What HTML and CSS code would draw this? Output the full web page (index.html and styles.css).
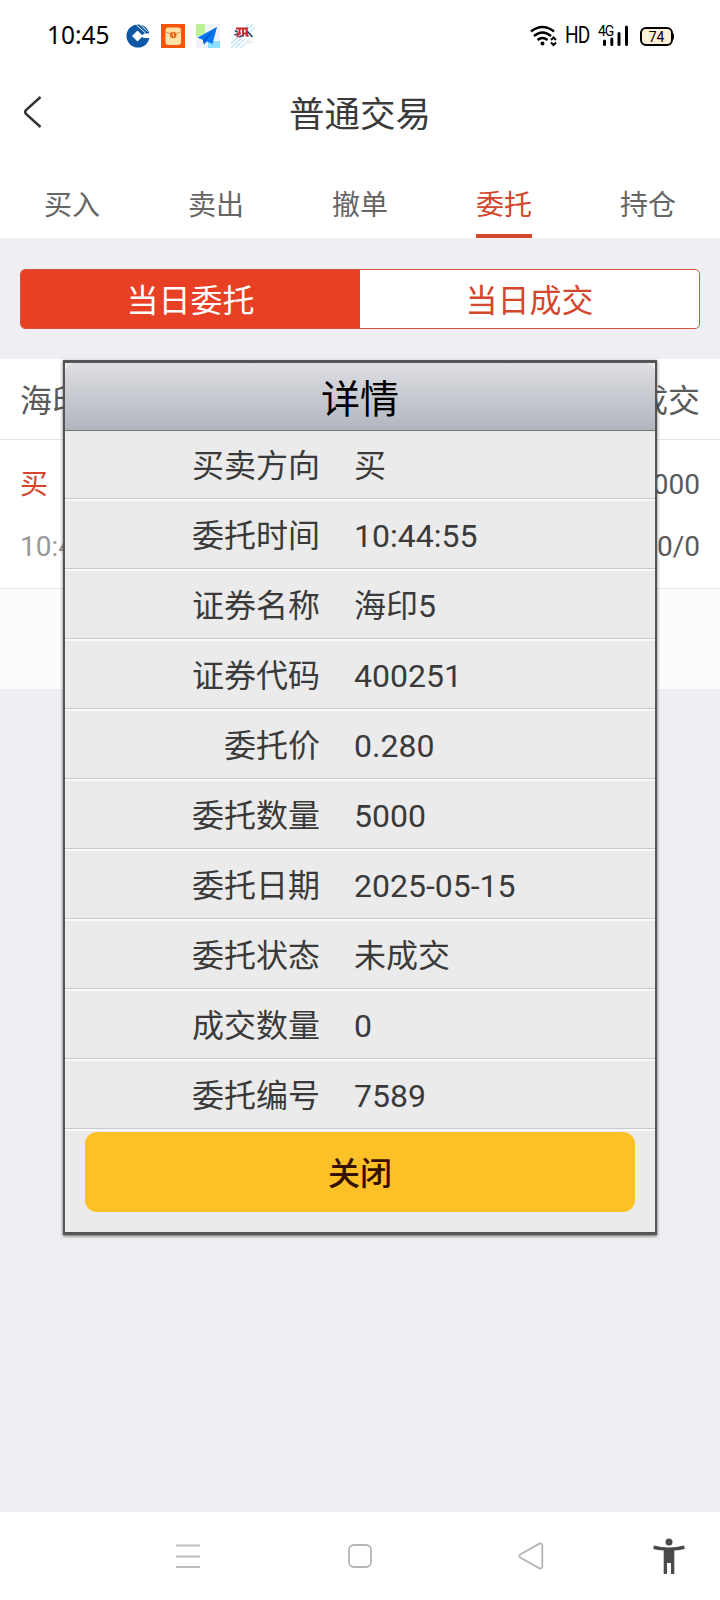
FILE: index.html
```html
<!DOCTYPE html>
<html lang="zh-CN">
<head>
<meta charset="utf-8">
<title>普通交易</title>
<link rel="stylesheet" href="styles.css">
</head>
<body>
<div class="phone">
  <header class="status">
    <span class="clock">10:45</span>
    <div class="apps">
      <svg width="24" height="24" viewBox="0 0 24 24"><circle cx="12" cy="12" r="11.500" fill="#0d57a5"/><path d="M11.500 6.500 17 12 11.500 17.500 6 12Z" fill="#fff"/><path d="M15.500 12 18 9.500H24V14H17.500Z" fill="#fff"/><path d="M10.500 1 19.500 9M13.500 0 21.500 7.500" stroke="#fff" stroke-width="1"/></svg>
      <svg width="24" height="24" viewBox="0 0 24 24"><rect width="24" height="24" fill="#f4540c"/><rect x="4.500" y="3.500" width="15.500" height="17.500" rx="3" fill="#ffe3a6"/><path d="M5 8Q12 12 19.500 8" fill="none" stroke="#e88a3c"/><circle cx="12.200" cy="11" r="3.300" fill="#ea6418"/><path d="M11.300 10 12.400 9.300V13" fill="none" stroke="#ffe3a6"/></svg>
      <svg width="24" height="24" viewBox="0 0 24 24"><rect width="24" height="24" fill="#f0f3fa"/><path d="M0 0H9V9L0 13Z" fill="#bdf294"/><path d="M12 17H24V24H12Z" fill="#8de0fb"/><path d="M21 3 1.500 13.500 7 16 8 20.500 11 17.500 16.500 20Z" fill="#0879f2"/><path d="M21 3 7 16 8 20.500 10 16Z" fill="#0553c4"/></svg>
      <svg width="24" height="24" viewBox="0 0 24 24"><path d="M0 20 7 13M0 24 11 14M4 24 14 15M9 24 18 16M17 5 22 0M19 8 24 3M14 4 18 0" stroke="#c2e4f4" stroke-width="1.300"/><path d="M13 20Q14 17 17 18Q20 15 23 19Z" fill="#edf1f6"/><path d="M5 4.500H17M8.500 4V9L6 13M12 4V12.500M15.500 4V11.500L17.500 12M6 9.500H10M13 9.500H17" fill="none" stroke="#c02e30" stroke-width="2"/><path d="M4 6.500 6.500 8M3.500 11 6 10M16 7 21.500 13M8 13 12 11.500" fill="none" stroke="#30456a" stroke-width="1.800"/></svg>
    </div>
    <div class="signals">
      <svg class="wifi" width="28" height="22" viewBox="0 0 28 22"><g fill="none" stroke="#000" stroke-width="2.500"><path d="M1 6.500Q12.500-2.500 24 6.500"/><path d="M4 11Q12.500 4 21 11"/><path d="M7.500 15Q12.500 11 17.500 15"/></g><circle cx="12.500" cy="18.500" r="2"/><path d="M21 15 23.500 12.500 26 15M21 17.500 23.500 20 26 17.500" fill="none" stroke="#000" stroke-width="2"/></svg>
      <span class="hd">HD</span>
      <div class="cell"><span class="gen">4G</span><svg width="30" height="22" viewBox="0 0 30 22"><path d="M5.500 16V19.500M12.800 14V19.500M20 8.500V19.500M27.500 2V19.500" stroke="#000" stroke-width="3" stroke-linecap="round"/></svg></div>
      <div class="battery">74</div>
    </div>
  </header>
  <div class="titlebar">
    <svg class="back" width="22" height="34" viewBox="0 0 22 34"><path d="M18.500 2 4 15.200Q2.400 17 4 18.800L18.500 32" fill="none" stroke="#333" stroke-width="2.500"/></svg>
    <h1 class="title">普通交易</h1>
  </div>
  <nav class="tabs">
    <span class="tab">买入</span><span class="tab">卖出</span><span class="tab">撤单</span><span class="tab tab-on">委托</span><span class="tab">持仓</span>
  </nav>
  <div class="segments">
    <span class="segment segment-on">当日委托</span><span class="segment">当日成交</span>
  </div>
  <section class="orders">
    <div class="order-head"><span>海印5</span><span>未成交</span></div>
    <div class="order-body">
      <div class="order-line"><span class="buy">买</span><span>0.280/5000</span></div>
      <div class="order-line"><span class="time">10:44:55</span><span>0.000/0</span></div>
    </div>
    <div class="orders-foot"></div>
  </section>
  <footer class="navbar">
    <svg class="nav-menu" width="24" height="24" viewBox="0 0 24 24"><path d="M0 1.500H24M0 12.500H24M0 23H24" stroke="#bdbdbd" stroke-width="2"/></svg>
    <svg class="nav-home" width="24" height="24" viewBox="0 0 24 24"><rect x="1" y="1" width="22" height="22" rx="5" fill="none" stroke="#b5b5b5" stroke-width="1.800"/></svg>
    <svg class="nav-back" width="26" height="28" viewBox="0 0 26 28"><path d="M21.500 1.600 2.200 12.500Q.5 14 2.200 15.500L21.500 26.400Q24.300 27 24.300 24.500V3.500Q24.300 1 21.500 1.600Z" fill="none" stroke="#b5b5b5" stroke-width="1.800"/></svg>
    <svg class="nav-access" width="32" height="36" viewBox="0 0 32 36"><circle cx="16" cy="4" r="3.500" fill="#4a4a4a"/><path d="M.8 7.500Q16 11.500 31.200 7.500L31.700 11Q27 12.300 21.300 12.500V36H18V25H14V36H10.700V12.500Q5 12.300.3 11Z" fill="#4a4a4a"/></svg>
  </footer>
  <div class="dialog">
    <h2 class="dialog-title">详情</h2>
    <dl class="details">
      <div class="row"><dt>买卖方向</dt><dd>买</dd></div>
      <div class="row"><dt>委托时间</dt><dd>10:44:55</dd></div>
      <div class="row"><dt>证券名称</dt><dd>海印5</dd></div>
      <div class="row"><dt>证券代码</dt><dd>400251</dd></div>
      <div class="row"><dt>委托价</dt><dd>0.280</dd></div>
      <div class="row"><dt>委托数量</dt><dd>5000</dd></div>
      <div class="row"><dt>委托日期</dt><dd>2025-05-15</dd></div>
      <div class="row"><dt>委托状态</dt><dd>未成交</dd></div>
      <div class="row"><dt>成交数量</dt><dd>0</dd></div>
      <div class="row"><dt>委托编号</dt><dd>7589</dd></div>
    </dl>
    <button class="close">关闭</button>
  </div>
</div>
</body>
</html>
```
FILE: styles.css
```css
* { box-sizing: border-box; }
body { margin: 0; font-family: Roboto, "Noto Sans CJK SC", sans-serif; color: #3a3a3a; }
h1, h2, dl, dd { margin: 0; font-weight: 400; }
svg { display: block; flex: none; }
.phone { position: relative; width: 720px; height: 1600px; display: flex; flex-direction: column; background: #efeef3; overflow: hidden; }
.status { height: 72px; display: flex; align-items: center; background: #fff; color: #000; padding: 0 46px 0 47px; }
.clock { font-family: "Noto Sans", sans-serif; font-size: 24.500px; line-height: 34px; width: 79px; padding-bottom: 2px; white-space: nowrap; }
.apps { display: flex; gap: 11px; }
.signals { display: flex; align-items: center; margin-left: auto; }
.hd { font-size: 23px; line-height: 28px; margin-left: 7px; letter-spacing: -1px; width: 34px; transform: scaleX(.83); transform-origin: left; }
.cell { position: relative; width: 30px; }
.gen { position: absolute; left: -1px; top: -1px; font-size: 14px; line-height: 14px; letter-spacing: -1px; }
.battery { position: relative; width: 33px; height: 19px; margin-left: 11px; margin-right: 1px; border: 2px solid #000; border-radius: 6px; background: #fff2d8; font-size: 14px; line-height: 16px; text-align: center; }
.battery::after { content: ""; position: absolute; right: -3px; top: 4px; width: 2px; height: 7px; border-radius: 0 2px 2px 0; background: #000; }
.titlebar { position: relative; height: 92px; display: flex; align-items: center; justify-content: center; background: #fff; }
.back { position: absolute; left: 22px; top: 23px; }
.title { font-size: 35.500px; line-height: 52px; padding-bottom: 6px; }
.tabs { height: 74px; display: flex; background: #fff; color: #666; font-size: 28px; justify-content: space-around; }
.tab { width: 56px; line-height: 40px; padding-top: 22px; white-space: nowrap; }
.tab-on { color: #d4472d; border-bottom: 4px solid #d4472d; }
.segments { display: flex; height: 60px; margin: 31px 20px 30px; border: 1px solid #d0533f; border-radius: 5px; overflow: hidden; background: #fff; }
.segment { flex: 1; text-align: center; font-size: 32px; line-height: 62px; color: #d4472d; }
.segment-on { background: #e84024; color: #fff; }
.orders { background: #fff; color: #5a5a5a; }
.order-head { display: flex; justify-content: space-between; height: 81px; padding: 0 20px; font-size: 32px; line-height: 84px; border-bottom: 1px solid #e5e5e5; }
.order-body { height: 149px; padding: 14px 20px 12px; border-bottom: 1px solid #e5e5e5; }
.order-line { display: flex; justify-content: space-between; font-size: 28px; line-height: 62px; height: 62px; }
.buy { color: #d4472d; }
.time { color: #999; }
.orders-foot { height: 100px; background: #fcfcfc; }
.navbar { display: flex; align-items: center; height: 88px; margin-top: auto; background: #fff; padding: 0 20px 0 176px; }
.nav-home { margin-left: 148px; }
.nav-back { margin-left: 146px; }
.nav-access { margin-left: 109px; }
.dialog { position: absolute; left: 63px; top: 360px; width: 594px; height: 875px; display: flex; flex-direction: column; background: #ebebeb; border: 2px solid #555; border-width: 3px 2px; box-shadow: 0 1px 3px rgba(0,0,0,.6); }
.dialog-title { height: 68px; flex: none; font-size: 39px; line-height: 75px; text-align: center; color: #000; background: linear-gradient(#dedfe3, #b1b5be); border-bottom: 1px solid #777; border-radius: 10px 10px 0 0; }
.row { display: flex; height: 70px; font-size: 32px; line-height: 71px; border-bottom: 2px solid #fafcfc; box-shadow: inset 0 -1px #c3cbd0; }
.row dt { width: 255px; text-align: right; }
.row dd { margin-left: 34px; }
.close { flex: none; width: 550px; height: 80px; margin: 1px auto 0; padding: 0; border: 0; border-radius: 12px; background: #fdc128; color: #351200; font: 500 32px/84px Roboto, "Noto Sans CJK SC", sans-serif; }
```
